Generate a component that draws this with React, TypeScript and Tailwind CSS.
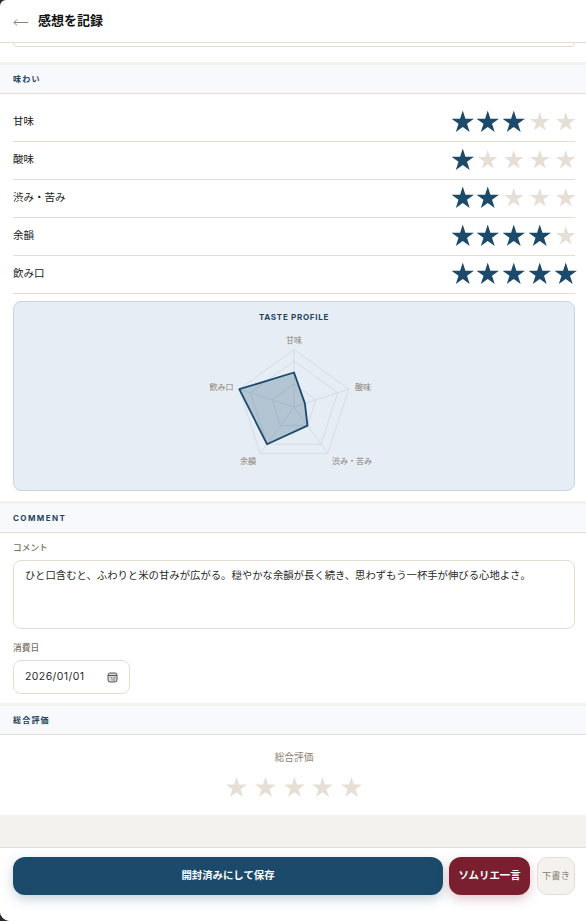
const TASTE_ROWS = [
  { label: "甘味", value: 3 },
  { label: "酸味", value: 1 },
  { label: "渋み・苦み", value: 2 },
  { label: "余韻", value: 4 },
  { label: "飲み口", value: 5 },
];

const STAR_POINTS = "50,0 61.8,36.3 100,36.3 69.1,58.8 80.9,95.1 50,72.6 19.1,95.1 30.9,58.8 0,36.3 38.2,36.3";

function Star({ filled }: { filled: boolean }) {
  return (
    <svg viewBox="0 0 100 95.1" className={`w-[19.5px] shrink-0 ${filled ? "scale-[1.15] fill-[#1c4a6a]" : "fill-[#e5dfd6]"}`}>
      <polygon points={STAR_POINTS} />
    </svg>
  );
}

function SectionHeader({ children, wide }: { children: string; wide?: boolean }) {
  return (
    <div className="mt-[3px] flex h-[29px] shrink-0 items-center border-b border-[#e5ddd0] bg-[#f8f9fd] px-[13px]">
      <span className={`text-[8px] font-bold text-[#1f4560] ${wide ? "tracking-[0.18em]" : "tracking-[0.15em]"}`}>{children}</span>
    </div>
  );
}

function polar(index: number, radius: number) {
  const angle = (Math.PI * 2 * index) / 5 - Math.PI / 2;
  return `${(100 + radius * Math.cos(angle)).toFixed(1)},${(75 + radius * Math.sin(angle)).toFixed(1)}`;
}

function ring(radius: number) {
  return [0, 1, 2, 3, 4].map((i) => polar(i, radius)).join(" ");
}

function Radar() {
  const R = 57.5;
  const data = TASTE_ROWS.map((row, i) => polar(i, (R * row.value) / 5)).join(" ");
  const labels = [
    { x: 100, y: 11, text: "甘味" },
    { x: 169, y: 58, text: "酸味" },
    { x: 158, y: 132, text: "渋み・苦み" },
    { x: 54, y: 132, text: "余韻" },
    { x: 27.5, y: 58, text: "飲み口" },
  ];
  return (
    <svg width="200" height="150" viewBox="0 0 200 150" className="mt-[9px] shrink-0">
      {[R, R * 0.8, R * 0.4].map((r) => (
        <polygon key={r} points={ring(r)} fill="none" stroke="#cfd8e3" strokeWidth="0.8" />
      ))}
      {[0, 1, 2, 3, 4].map((i) => {
        const [x, y] = polar(i, R).split(",");
        return <line key={i} x1="100" y1="75" x2={x} y2={y} stroke="#cfd8e3" strokeWidth="0.8" />;
      })}
      <polygon points={data} fill="#1c4a6a" fillOpacity="0.25" stroke="#1c4a6a" strokeWidth="1.8" strokeLinejoin="round" />
      {labels.map((l) => (
        <text key={l.text} x={l.x} y={l.y} textAnchor="middle" fontSize="8" fill="#8a8072">
          {l.text}
        </text>
      ))}
    </svg>
  );
}

export default function App() {
  return (
    <div className="h-[921px] w-[586px] overflow-hidden bg-[#2a2a2a] font-['Inter','Noto_Sans_CJK_JP',sans-serif]">
      <div className="flex h-full flex-col overflow-hidden rounded-tl-[6px] rounded-bl-[10px] bg-white">
        <header className="flex h-[43px] shrink-0 items-center gap-[10px] border-b border-[#e5ddd0] px-[13px]">
          <svg width="15" height="9" viewBox="0 0 15 9" fill="none" stroke="#8f7f6c" strokeWidth="1" className="mt-[3px]">
            <path d="M15 4.5H1M4 1.5 1 4.5l3 3" />
          </svg>
          <h1 className="text-[13px] font-bold text-[#111]">感想を記録</h1>
        </header>

        <main className="flex min-h-0 flex-1 flex-col bg-[#f4f2ee]">
          <div className="bg-white pr-[11px] pb-[15px] pl-[13px]">
            <div className="h-[4px] rounded-b-[6px] border border-t-0 border-[#e5ddd0]" />
          </div>

          <SectionHeader>味わい</SectionHeader>
          <section className="flex flex-col bg-white pt-[10px] pr-[11px] pb-[10px] pl-[13px]">
            {TASTE_ROWS.map((row) => (
              <div key={row.label} className="flex h-[38px] items-center justify-between border-b border-[#e5ddd0] pb-[2px]">
                <span className="text-[10.5px] text-[#1a1a1a]">{row.label}</span>
                <div className="flex items-center gap-[6.2px]">
                  {[1, 2, 3, 4, 5].map((n) => (
                    <Star key={n} filled={n <= row.value} />
                  ))}
                </div>
              </div>
            ))}
            <div className="mt-[7px] flex h-[190px] flex-col items-center rounded-[8px] border border-[#c9d5e3] bg-[#e6edf5] pt-[10px]">
              <p className="text-[8px] leading-[11px] font-bold tracking-[0.09em] text-[#1f4560]">TASTE PROFILE</p>
              <Radar />
            </div>
          </section>

          <SectionHeader wide>COMMENT</SectionHeader>
          <section className="flex flex-col bg-white pt-[9px] pr-[11px] pb-[9px] pl-[13px]">
            <label className="text-[8.7px] leading-[12px] font-medium text-[#7a7062]">コメント</label>
            <div className="mt-[6px] h-[69px] rounded-[8px] border border-[#e5ddd0] px-[11px] pt-[7px] text-[10.37px] leading-[16px] text-[#2a2a2a]">
              ひと口含むと、ふわりと米の甘みが広がる。穏やかな余韻が長く続き、思わずもう一杯手が伸びる心地よさ。
            </div>
            <label className="mt-[13px] text-[8.7px] leading-[12px] font-medium text-[#7a7062]">消費日</label>
            <div className="mt-[6px] flex h-[34px] w-[117px] items-center justify-between rounded-[8px] border border-[#e5ddd0] pr-[11px] pl-[11px]">
              <span className="text-[10.5px] tracking-[0.04em] text-[#2a2a2a]">2026/01/01</span>
              <svg width="11" height="11" viewBox="0 0 11 11" fill="none">
                <rect x="1" y="1" width="9" height="9" rx="2" fill="#d9d9d9" stroke="#555" strokeWidth="1" />
                <path d="M1 3.5h9" stroke="#555" strokeWidth="1" />
                <path d="M3.5 5.5h1.5v3M6.5 5.5h1.5v1.5h-1.5v1.5h1.5" stroke="#777" strokeWidth="0.6" />
              </svg>
            </div>
          </section>

          <SectionHeader>総合評価</SectionHeader>
          <section className="flex h-[80px] flex-col items-center bg-white pt-[16px] pr-[11px] pl-[13px]">
            <span className="text-[9.7px] leading-[13px] text-[#8a8072]">総合評価</span>
            <div className="mt-[13px] flex gap-[7.7px]">
              {[1, 2, 3, 4, 5].map((n) => (
                <svg key={n} viewBox="0 0 100 95.1" className="w-[21px] fill-[#e5dfd6]">
                  <polygon points={STAR_POINTS} />
                </svg>
              ))}
            </div>
          </section>
        </main>

        <footer className="flex h-[74px] shrink-0 gap-[6px] border-t border-[#e5ddd0] bg-white pt-[9px] pr-[11px] pl-[13px]">
          <button className="h-[38px] flex-1 rounded-[12px] bg-[#1c4a6a] text-[10.4px] font-bold text-white shadow-[0_4px_12px_rgba(28,74,106,0.25)]">
            開封済みにして保存
          </button>
          <button className="h-[38px] w-[81px] rounded-[12px] bg-[#7a1f30] text-[10.4px] font-bold text-white shadow-[0_4px_12px_rgba(122,31,48,0.25)]">
            ソムリエ一言
          </button>
          <button className="ml-[1px] h-[38px] w-[38px] rounded-[10px] border border-[#e5ddd0] bg-[#f4f2ee] text-[9.3px] text-[#8a8072]">
            下書き
          </button>
        </footer>
      </div>
    </div>
  );
}
